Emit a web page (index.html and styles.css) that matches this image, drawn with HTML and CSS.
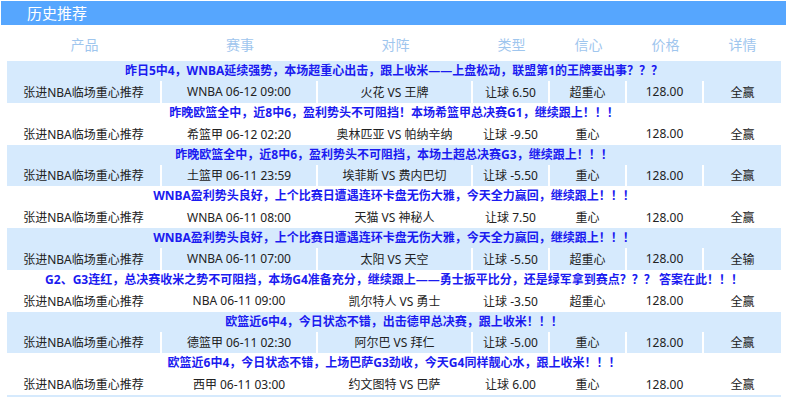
FILE: index.html
```html
<!DOCTYPE html>
<html lang="zh-CN">
<head>
<meta charset="utf-8">
<title>历史推荐</title>
<link rel="stylesheet" href="styles.css">
</head>
<body>
<div class="page">
  <div class="bar"><span class="bar-title">历史推荐</span></div>
  <div class="table">
    <div class="grid head">
      <div>产品</div><div>赛事</div><div>对阵</div><div>类型</div><div>信心</div><div>价格</div><div>详情</div>
    </div>

    <div class="rec alt">
      <div class="note">昨日5中4，WNBA延续强势，本场超重心出击，跟上收米——上盘松动，联盟第1的王牌要出事？？？</div>
      <div class="grid row"><div>张进NBA临场重心推荐</div><div>WNBA 06-12 09:00</div><div>火花 VS 王牌</div><div>让球 6.50</div><div>超重心</div><div>128.00</div><div>全赢</div></div>
    </div>

    <div class="rec">
      <div class="note">昨晚欧篮全中，近8中6，盈利势头不可阻挡！本场希篮甲总决赛G1，继续跟上！！！</div>
      <div class="grid row"><div>张进NBA临场重心推荐</div><div>希篮甲 06-12 02:20</div><div>奥林匹亚 VS 帕纳辛纳</div><div>让球 -9.50</div><div>重心</div><div>128.00</div><div>全赢</div></div>
    </div>

    <div class="rec alt">
      <div class="note">昨晚欧篮全中，近8中6，盈利势头不可阻挡，本场土超总决赛G3，继续跟上！！！</div>
      <div class="grid row"><div>张进NBA临场重心推荐</div><div>土篮甲 06-11 23:59</div><div>埃菲斯 VS 费内巴切</div><div>让球 -5.50</div><div>重心</div><div>128.00</div><div>全赢</div></div>
    </div>

    <div class="rec">
      <div class="note">WNBA盈利势头良好，上个比赛日遭遇连环卡盘无伤大雅，今天全力赢回，继续跟上！！！</div>
      <div class="grid row"><div>张进NBA临场重心推荐</div><div>WNBA 06-11 08:00</div><div>天猫 VS 神秘人</div><div>让球 7.50</div><div>重心</div><div>128.00</div><div>全赢</div></div>
    </div>

    <div class="rec alt">
      <div class="note">WNBA盈利势头良好，上个比赛日遭遇连环卡盘无伤大雅，今天全力赢回，继续跟上！！！</div>
      <div class="grid row"><div>张进NBA临场重心推荐</div><div>WNBA 06-11 07:00</div><div>太阳 VS 天空</div><div>让球 -5.50</div><div>超重心</div><div>128.00</div><div>全输</div></div>
    </div>

    <div class="rec">
      <div class="note">G2、G3连红，总决赛收米之势不可阻挡，本场G4准备充分，继续跟上——勇士扳平比分，还是绿军拿到赛点？？？ 答案在此！！！</div>
      <div class="grid row"><div>张进NBA临场重心推荐</div><div>NBA 06-11 09:00</div><div>凯尔特人 VS 勇士</div><div>让球 -3.50</div><div>超重心</div><div>128.00</div><div>全赢</div></div>
    </div>

    <div class="rec alt">
      <div class="note">欧篮近6中4，今日状态不错，出击德甲总决赛，跟上收米！！！</div>
      <div class="grid row"><div>张进NBA临场重心推荐</div><div>德篮甲 06-11 02:30</div><div>阿尔巴 VS 拜仁</div><div>让球 -5.00</div><div>重心</div><div>128.00</div><div>全赢</div></div>
    </div>

    <div class="rec">
      <div class="note">欧篮近6中4，今日状态不错，上场巴萨G3劲收，今天G4同样靓心水，跟上收米！！！</div>
      <div class="grid row"><div>张进NBA临场重心推荐</div><div>西甲 06-11 03:00</div><div>约文图特 VS 巴萨</div><div>让球 6.00</div><div>重心</div><div>128.00</div><div>全赢</div></div>
    </div>

    <div class="rec alt tail"></div>
  </div>
</div>
</body>
</html>
```

FILE: styles.css
```css
html, body {
  margin: 0;
  padding: 0;
  background: #fff;
  overflow: hidden;
}
body {
  font-family: "Noto Sans", "Noto Sans CJK SC", sans-serif;
  font-size: 12px;
  color: #222;
}
.page {
  padding: 1px 0 0 1px;
}
.bar {
  height: 24px;
  background: #56a6fe;
  display: flex;
  align-items: center;
  padding-left: 26px;
}
.bar-title {
  color: #fff;
  font-size: 15px;
  line-height: 24px;
}
.table {
  margin-left: 6px;
  width: 774px;
}
.grid {
  display: grid;
  grid-template-columns: 155px 156px 155px 77px 77px 77px 77px;
}
.grid > div {
  display: flex;
  align-items: center;
  justify-content: center;
  white-space: nowrap;
}
.head {
  height: 36px;
  color: #9fc6ee;
  font-size: 14px;
}
.head > div {
  padding-top: 2px;
}
.note {
  height: 20px;
  line-height: 20px;
  text-align: center;
  font-weight: bold;
  color: #1b1bf0;
  white-space: nowrap;
}
.row {
  height: 21.75px;
}
.row > div {
  border-right: 2px solid #fff;
}
.row > div:last-child {
  border-right: 0;
}
.alt {
  background: #d6eafd;
}
.tail {
  height: 20px;
}
```
